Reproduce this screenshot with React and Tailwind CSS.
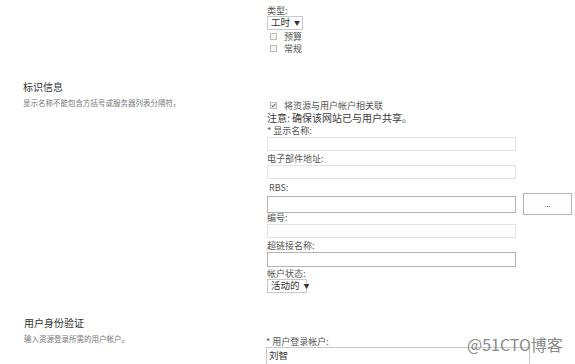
import React from "react";

const font = { fontFamily: '"Noto Sans CJK SC", "Liberation Sans", sans-serif' };

const Label = ({ children, className = "" }) => (
  <div className={`h-[11px] whitespace-nowrap text-[9px] leading-[11px] text-[#555] ${className}`}>{children}</div>
);

const Input = ({ dark, className = "", value = "" }) => (
  <div
    className={`h-[14px] w-[249px] shrink-0 border bg-white text-[9px] leading-[12px] pl-[3px] text-[#333] ${
      dark ? "border-[#b4b4b4]" : "border-[#e3e3e3]"
    } ${className}`}
  >
    {value}
  </div>
);

const Select = ({ text, w }) => (
  <div
    className={`flex h-[14px] shrink-0 items-center gap-[4px] whitespace-nowrap border border-[#c8c8c8] bg-white pl-[3px] text-[9.5px] leading-none text-[#333] ${w}`}
  >
    <span>{text}</span>
    <span className="text-[6px]">▼</span>
  </div>
);

const Check = ({ checked, children }) => (
  <div className="flex h-[12px] items-center whitespace-nowrap">
    <div className="ml-[3px] mr-[7px] flex h-[7px] w-[7px] items-center justify-center border border-[#bcbcbc] bg-[#f4f4f4]">
      {checked && (
        <svg width="7" height="7" viewBox="0 0 7 7">
          <path d="M1 3.5 L2.8 5.3 L6 1.2" stroke="#333" strokeWidth="1.3" fill="none" />
        </svg>
      )}
    </div>
    <span className="text-[9px] leading-none text-[#555]">{children}</span>
  </div>
);

export default function App() {
  return (
    <div className="relative h-[364px] w-[575px] overflow-hidden bg-white" style={font}>
      {/* 类型 */}
      <div className="flex pt-[5px]">
        <div className="w-[267px]" />
        <div className="flex flex-col">
          <Label className="text-[#444]">类型:</Label>
          <Select text="工时" w="w-[36px]" />
          <div>
            <Check>预算</Check>
            <Check>常规</Check>
          </div>
        </div>
      </div>

      {/* 标识信息 */}
      <div className="mt-[27px] flex">
        <div className="w-[267px] pl-[23px]">
          <div className="text-[10px] leading-[12px] text-[#333]">标识信息</div>
          <div className="mt-[5px] text-[7.5px] leading-[10px] text-[#777]">
            显示名称不能包含方括号或服务器列表分隔符。
          </div>
        </div>
        <div className="flex flex-col pt-[18px]">
          <Check checked>将资源与用户帐户相关联</Check>
          <div className="mt-[1px] h-[12px] whitespace-nowrap text-[10px] leading-[12px] text-[#3a3a3a]">
            注意: 确保该网站已与用户共享。
          </div>
          <Label className="mt-[1px]">* 显示名称:</Label>
          <Input className="mt-[1px]" />
          <Label className="mt-[2px]">电子部件地址:</Label>
          <Input className="mt-[1px] h-[13px]" />
          <Label className="mt-[3px] pl-[2px]">RBS:</Label>
          <div className="flex items-center">
            <Input dark className="h-[17px]" />
            <div className="ml-[7px] flex h-[22px] w-[49px] items-center justify-center border border-[#b4b4b4] bg-[#fdfdfd] text-[8px] text-[#555]">
              ...
            </div>
          </div>
          <Label className="-mt-[3px] text-[#444]">编号:</Label>
          <Input className="mt-[1px] h-[14px]" />
          <Label className="mt-[2px]">超链接名称:</Label>
          <Input dark className="mt-[1px] h-[15px]" />
          <Label className="mt-[1px]">帐户状态:</Label>
          <Select text="活动的" w="w-[40px]" />
        </div>
      </div>

      {/* 用户身份验证 */}
      <div className="mt-[24px] flex">
        <div className="w-[266px] pl-[24px]">
          <div className="text-[10px] leading-[12px] text-[#333]">用户身份验证</div>
          <div className="mt-[5px] text-[7.5px] leading-[10px] text-[#777]">输入资源登录所需的用户帐户。</div>
        </div>
        <div className="flex flex-col pt-[19px]">
          <Label>* 用户登录帐户:</Label>
          <div className="h-[20px] w-[264px] border border-[#c8c8c8] border-b-0 pl-[2px] text-[9.5px] leading-[14px] text-[#333]">
            刘智
          </div>
        </div>
      </div>

      <div className="absolute left-[467px] top-[334px] text-[16px] leading-[20px] text-[#8a8a8a]">
        @51CTO博客
      </div>
    </div>
  );
}
